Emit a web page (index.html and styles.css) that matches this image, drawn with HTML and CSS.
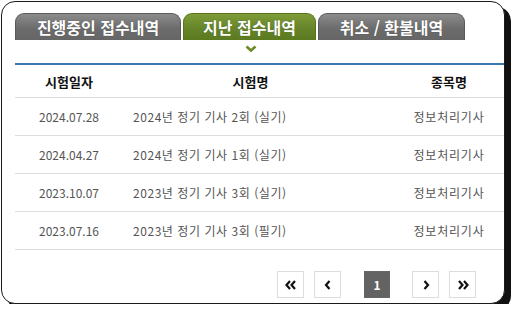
FILE: index.html
```html
<!DOCTYPE html>
<html lang="ko">
  <head>
    <meta charset="UTF-8" />
    <meta name="viewport" content="width=device-width, initial-scale=1.0" />
    <title>접수내역</title>
    <link rel="stylesheet" href="styles.css">
  </head>
  <body>
    <div class="card">
      <div class="tabs">
        <a class="tab tab-wide">진행중인 접수내역</a>
        <a class="tab tab-active">지난 접수내역</a>
        <a class="tab tab-cancel">취소 / 환불내역</a>
      </div>
      <div class="tab-marker">
        <svg width="12" height="8" viewBox="0 0 12 8">
          <polyline points="1.5,1.5 6,5.5 10.5,1.5" fill="none" stroke="#6b8a26" stroke-width="2.6" />
        </svg>
      </div>

      <table class="history">
        <colgroup>
          <col class="col-date" />
          <col class="col-title" />
          <col />
        </colgroup>
        <thead>
          <tr>
            <th>시험일자</th>
            <th class="th-title">시험명</th>
            <th>종목명</th>
          </tr>
        </thead>
        <tbody>
          <tr>
            <td>2024.07.28</td>
            <td class="td-title">2024년 정기 기사 2회 (실기)</td>
            <td class="td-kind">정보처리기사</td>
          </tr>
          <tr>
            <td>2024.04.27</td>
            <td class="td-title">2024년 정기 기사 1회 (실기)</td>
            <td class="td-kind">정보처리기사</td>
          </tr>
          <tr>
            <td>2023.10.07</td>
            <td class="td-title">2023년 정기 기사 3회 (실기)</td>
            <td class="td-kind">정보처리기사</td>
          </tr>
          <tr>
            <td>2023.07.16</td>
            <td class="td-title">2023년 정기 기사 3회 (필기)</td>
            <td class="td-kind">정보처리기사</td>
          </tr>
        </tbody>
      </table>

      <div class="paging">
        <a class="page-btn">
          <svg width="12" height="10" viewBox="0 0 12 10">
            <polyline points="5,1 1.5,5 5,9" fill="none" stroke="#111" stroke-width="2.2" />
            <polyline points="10,1 6.5,5 10,9" fill="none" stroke="#111" stroke-width="2.2" />
          </svg>
        </a>
        <a class="page-btn">
          <svg width="8" height="10" viewBox="0 0 8 10">
            <polyline points="5.5,1 2,5 5.5,9" fill="none" stroke="#111" stroke-width="2.2" />
          </svg>
        </a>
        <a class="page-btn page-current">1</a>
        <a class="page-btn">
          <svg width="8" height="10" viewBox="0 0 8 10">
            <polyline points="2.5,1 6,5 2.5,9" fill="none" stroke="#111" stroke-width="2.2" />
          </svg>
        </a>
        <a class="page-btn">
          <svg width="12" height="10" viewBox="0 0 12 10">
            <polyline points="2,1 5.5,5 2,9" fill="none" stroke="#111" stroke-width="2.2" />
            <polyline points="7,1 10.5,5 7,9" fill="none" stroke="#111" stroke-width="2.2" />
          </svg>
        </a>
      </div>
    </div>
  </body>
</html>
```

FILE: styles.css
```css
body {
  margin: 0;
  padding: 1px 0 0 1px;
  background-color: #ffffff;
  font-family: "Noto Sans CJK KR", "Noto Sans", sans-serif;
}

.card {
  box-sizing: border-box;
  width: 504px;
  height: 303px;
  padding: 11px 0 0 13px;
  border: 1px solid #1a1a1a;
  border-radius: 14px;
  background-color: #ffffff;
  box-shadow: 6px 6px 0 #111111; /* heavy frame shadow */
  display: flex;
  flex-direction: column;
}

.tabs {
  display: flex;
  gap: 2px;
  height: 27px;
}

.tab {
  box-sizing: border-box;
  display: flex;
  justify-content: center;
  align-items: center;
  border: 1px solid #5a5a5a;
  border-bottom: none;
  border-radius: 9px 9px 0 0;
  background: linear-gradient(#8c8c8c, #6c6c6c 55%, #666666);
  color: #ffffff;
  font-size: 16px;
  font-weight: 700;
  line-height: 1;
  text-shadow: 0 0 1px rgba(0, 0, 0, 0.4);
}

.tab-wide {
  width: 166px;
}

.tab-active {
  width: 133px;
  border-color: #56731a;
  background: linear-gradient(#7f9c37, #66852a 55%, #5b7a20);
}

.tab-cancel {
  width: 147px;
}

.tab-marker {
  height: 23px;
  padding-left: 230px;
  padding-top: 5px;
  box-sizing: border-box;
}

.tab-marker svg {
  display: block;
}

.history {
  width: 489px;
  border-collapse: collapse;
  table-layout: fixed;
  border-top: 2px solid #3b76b0;
}

.col-date {
  width: 108px;
}

.col-title {
  width: 271px;
}

.history th {
  height: 32px;
  padding: 0;
  font-size: 13px;
  font-weight: 700;
  color: #111111;
  text-align: center;
  border-bottom: 1px solid #dddddd;
}

.history th.th-title {
  padding-right: 16px;
}

.history td {
  height: 37px;
  padding: 0;
  font-size: 12px;
  color: #555555;
  text-align: center;
  border-bottom: 1px solid #dddddd;
}

.history td.td-title {
  text-align: left;
  padding-left: 10px;
  letter-spacing: 0.55px;
}

.history td.td-kind {
  letter-spacing: 0.8px;
}

.paging {
  display: flex;
  justify-content: flex-end;
  padding: 21px 28px 0 0;
  gap: 10px;
}

.page-btn {
  box-sizing: border-box;
  width: 27px;
  height: 27px;
  display: flex;
  justify-content: center;
  align-items: center;
  border: 1px solid #dddddd;
  background-color: #ffffff;
}

.page-current {
  margin: 0 12px 0 13px;
  width: 26px;
  border-color: #666666;
  background-color: #636363;
  color: #ffffff;
  font-size: 12px;
  font-weight: 700;
}
```
